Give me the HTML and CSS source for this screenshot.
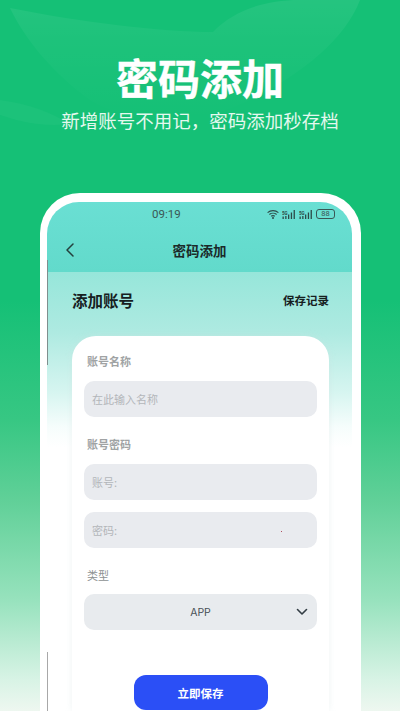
FILE: index.html
```html
<!DOCTYPE html>
<html lang="zh-CN">
<head>
<meta charset="utf-8">
<title>密码添加</title>
<link rel="stylesheet" href="styles.css">
</head>
<body>
<main class="page">
  <svg class="leaves" viewBox="0 0 400 200" aria-hidden="true">
    <defs>
      <linearGradient id="fade" x1="0" y1="0" x2="0" y2="1">
        <stop offset="0" stop-color="#fff" stop-opacity=".07"/>
        <stop offset=".35" stop-color="#fff" stop-opacity=".035"/>
        <stop offset="1" stop-color="#fff" stop-opacity="0"/>
      </linearGradient>
    </defs>
    <path fill="url(#fade)" d="M10 8C80 22 160 32 213 32 232 12 262 0 300 0H360C345 40 300 75 250 100 190 130 120 120 90 100 55 75 25 40 10 8Z"/>
    <path class="leaf2" d="M0 100C30 104 50 112 70 124 40 128 15 120 0 115Z"/>
  </svg>
  <header class="hero">
    <h1 class="title">密码添加</h1>
    <p class="subtitle">新增账号不用记&#xFF0C;密码添加秒存档</p>
  </header>
  <section class="phone">
    <div class="screen">
      <div class="topbar">
        <div class="status">
          <span class="time">09:19</span>
          <span class="status-icons">
            <svg class="wifi" viewBox="0 0 12 9" aria-hidden="true">
              <path d="M.6 2.600C3.600 0 8.400 0 11.400 2.600M2.400 4.500c2-1.700 5.200-1.700 7.200 0M4.200 6.300c1-.8 2.600-.8 3.600 0" fill="none" stroke="#2d4a48" stroke-width="1.100"/>
              <circle cx="6" cy="8" r="1" fill="#2d4a48"/>
            </svg>
            <svg class="signal" viewBox="0 0 14 9" aria-hidden="true">
              <text class="net" x="0" y="4.500">5G</text>
              <path d="M.5 6.500h1.300V9H.5zM3.200 6h1.300v3H3.200zM6 4.500h1.300V9H6zM8.800 2.500h1.300V9H8.800zM11.600 0h1.300v9h-1.300z" fill="#2d4a48"/>
            </svg>
            <svg class="signal" viewBox="0 0 14 9" aria-hidden="true">
              <text class="net" x="0" y="4.500">5G</text>
              <path d="M.5 6.500h1.300V9H.5zM3.200 6h1.300v3H3.200zM6 4.500h1.300V9H6zM8.800 2.500h1.300V9H8.800zM11.600 0h1.300v9h-1.300z" fill="#2d4a48"/>
            </svg>
            <span class="battery">88</span>
          </span>
        </div>
        <div class="nav">
          <svg class="back" viewBox="0 0 10 16" aria-hidden="true">
            <path d="M8 2 2 8l6 6" fill="none" stroke="#24403d" stroke-width="1.500" stroke-linecap="round" stroke-linejoin="round"/>
          </svg>
          <span class="nav-title">密码添加</span>
        </div>
      </div>
      <div class="body">
        <div class="head">
          <h2 class="head-title">添加账号</h2>
          <span class="head-link">保存记录</span>
        </div>
        <form class="card">
          <div class="label label-first">账号名称</div>
          <div class="field">在此输入名称</div>
          <div class="label label-gap">账号密码</div>
          <div class="field">账号:</div>
          <div class="field field-next">密码:</div>
          <div class="label label-type">类型</div>
          <div class="field select">
            <span>APP</span>
            <svg class="chevron" viewBox="0 0 12 8" aria-hidden="true">
              <path d="M1.500 1.500 6 6l4.500-4.500" fill="none" stroke="#333d44" stroke-width="1.600" stroke-linecap="round" stroke-linejoin="round"/>
            </svg>
          </div>
          <button class="save" type="button">立即保存</button>
        </form>
      </div>
      <i class="edge edge-top"></i>
      <i class="edge edge-bottom"></i>
      <i class="speck"></i>
    </div>
  </section>
</main>
</body>
</html>
```

FILE: styles.css
```css
* { box-sizing: border-box; }
html, body { margin: 0; padding: 0; }
body {
  width: 400px;
  height: 711px;
  overflow: hidden;
  font-family: "Noto Sans CJK SC", "Noto Sans", sans-serif;
}
.page {
  position: relative;
  width: 400px;
  height: 711px;
  overflow: hidden;
  background: linear-gradient(180deg, #15c076 0, #15c076 300px, #37c783 420px, #60d098 500px, #97e2bd 600px, #d8f3e5 680px, #eef7f0 711px);
}
.leaves {
  position: absolute;
  left: 0;
  top: 0;
  width: 400px;
  height: 200px;
}
.leaf2 { fill: #ffffff; fill-opacity: .03; }
.hero {
  position: relative;
  text-align: center;
  padding-top: 47px;
  height: 193px;
}
.title {
  margin: 0;
  font-size: 42px;
  line-height: 60px;
  font-weight: 700;
  color: #fff;
  -webkit-text-stroke: .4px #fff;
}
.subtitle {
  margin: 0;
  font-size: 18.500px;
  line-height: 26px;
  font-weight: 400;
  color: #e4f8ee;
}
.phone {
  position: relative;
  margin-left: 40px;
  width: 321px;
  height: 518px;
  padding: 9px 9px 0 7px;
  background: #fff;
  border-radius: 40px 40px 0 0;
}
.screen {
  position: relative;
  height: 509px;
  border-radius: 32px 32px 0 0;
  overflow: hidden;
  background: #fff;
}
.topbar {
  height: 70px;
  background: linear-gradient(180deg, #6adfd3 0, #62dacb 100%);
}
.status {
  position: relative;
  display: flex;
  align-items: center;
  height: 24px;
  padding: 0 17px 0 105px;
}
.time {
  font-family: "Roboto", sans-serif;
  font-size: 11.500px;
  color: #3a5755;
}
.status-icons {
  display: flex;
  align-items: center;
  gap: 3px;
  margin-left: auto;
}
.wifi { width: 12px; height: 9px; }
.signal { width: 14px; height: 9px; }
.net {
  font-family: "Roboto", sans-serif;
  font-size: 4.500px;
  font-weight: 700;
  fill: #2d4a48;
}
.battery {
  width: 19px;
  height: 10px;
  border: 1px solid #3a5755;
  border-radius: 3px;
  font-family: "Roboto", sans-serif;
  font-size: 7.500px;
  line-height: 8px;
  text-align: center;
  color: #3a5755;
}
.nav {
  position: relative;
  display: flex;
  align-items: center;
  justify-content: center;
  height: 26px;
  margin-top: 11px;
}
.back {
  position: absolute;
  left: 18px;
  top: 5px;
  width: 10px;
  height: 16px;
}
.nav-title {
  font-size: 13.500px;
  font-weight: 700;
  color: #1b2a29;
}
.body {
  height: 439px;
  padding: 0 23px 0 25px;
  background: linear-gradient(180deg, #96e6da 0, #aeeae1 60px, #d6f5f0 120px, #f6fdfc 155px, #fff 175px);
}
.head {
  display: flex;
  align-items: center;
  justify-content: space-between;
  height: 64px;
  padding-bottom: 8px;
}
.head-title {
  margin: 0;
  font-size: 15.500px;
  font-weight: 700;
  color: #16201f;
}
.head-link {
  font-size: 11.500px;
  font-weight: 700;
  color: #16201f;
}
.card {
  height: 375px;
  padding: 0 12px;
  background: #fff;
  border-radius: 24px 24px 0 0;
  box-shadow: 0 0 6px rgba(210, 225, 225, .35);
}
.label {
  font-size: 11px;
  line-height: 16px;
  font-weight: 700;
  color: #a0a3a4;
  padding-left: 3px;
}
.label-first { padding-top: 17px; height: 45px; }
.label-gap { padding-top: 19px; height: 47px; }
.label-type { padding-top: 19px; height: 46px; font-weight: 400; color: #8d9192; }
.field {
  display: flex;
  align-items: center;
  height: 36px;
  padding: 0 8px;
  border-radius: 10px;
  background: #e9ebef;
  font-size: 11px;
  color: #b3b6ba;
}
.field-next { margin-top: 12px; }
.select {
  position: relative;
  justify-content: center;
  background: #e8ebee;
  color: #4a5157;
  font-family: "Inter", sans-serif;
  font-size: 10.500px;
}
.chevron {
  position: absolute;
  right: 9px;
  top: 14px;
  width: 12px;
  height: 8px;
}
.save {
  display: block;
  width: 134px;
  height: 35px;
  margin: 45px auto 0;
  border: 0;
  border-radius: 12px;
  background: #2b4ff6;
  font-family: inherit;
  font-size: 11.500px;
  font-weight: 700;
  color: #fff;
}
.edge {
  position: absolute;
  left: 0;
  width: 1px;
  background: #7f8f8e;
}
.edge-top { top: 58px; height: 105px; }
.edge-bottom { top: 450px; height: 59px; background: #a8a8a8; }
.speck {
  position: absolute;
  left: 234px;
  top: 329px;
  width: 1px;
  height: 1px;
  background: #b05060;
}
```
